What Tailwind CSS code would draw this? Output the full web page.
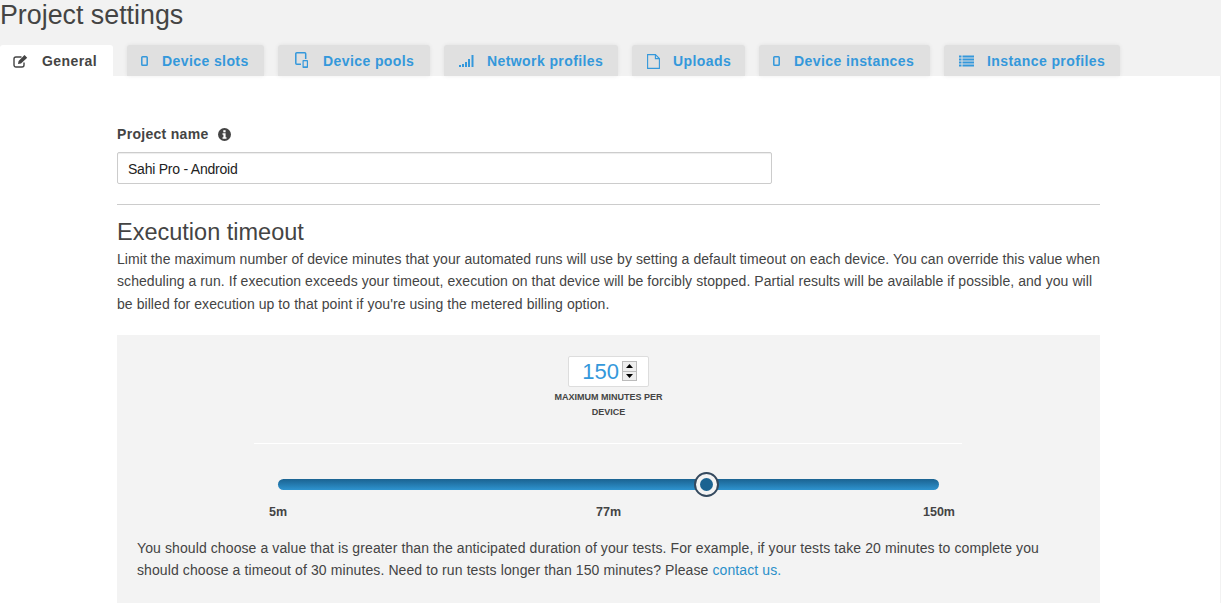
<!DOCTYPE html>
<html><head><meta charset="utf-8"><title>Project settings</title>
<script src="https://cdn.jsdelivr.net/npm/@tailwindcss/browser@4"></script></head>
<body class="bg-[#f2f2f2] font-['Liberation_Sans',Arial,sans-serif] text-[#444] overflow-hidden h-[603px] w-[1221px]">
<h1 class="text-[26.800px] leading-[31px] h-[45px] font-normal text-[#444]">Project settings</h1>
<nav class="flex gap-[14px] h-[31px] text-[14px] font-bold tracking-[0.41px] text-[#3498db]">
  <a class="w-[113px] bg-white rounded-t-[3px] flex items-center pt-[1px] pl-[13px] text-[#444]"><svg class="w-[15px] h-[14px] mr-[14px]" viewBox="0 0 15 14" fill="none" stroke="#444" stroke-width="1.400"><path d="M11 8.500v2.500a2 2 0 0 1-2 2H3a2 2 0 0 1-2-2V5a2 2 0 0 1 2-2h5.500"/><path d="M5 10l.6-3L11.500 1l2.700 2.700L8 9.500z" fill="#444" stroke="none"/></svg>General</a>
  <a class="w-[137px] bg-[#e0e0e0] rounded-t-[3px] shadow-[0_0_4px_rgba(0,0,0,0.08)] flex items-center pt-[1px] pl-[14px]"><svg class="w-[7px] h-[10px] mr-[14px]" viewBox="0 0 7 10" fill="none" stroke="#3498db" stroke-width="1.500"><rect x="0.800" y="0.800" width="5.400" height="8.400" rx="0.800"/></svg>Device slots</a>
  <a class="w-[152px] bg-[#e0e0e0] rounded-t-[3px] shadow-[0_0_4px_rgba(0,0,0,0.08)] flex items-center pt-[1px] pl-[17px]"><svg class="w-[13px] h-[16px] mr-[15px] -mt-[2px]" viewBox="0 0 13 16" fill="none" stroke="#3498db" stroke-width="1.500"><path d="M6 12.300H1.800a1 1 0 0 1-1-1V1.800a1 1 0 0 1 1-1h7.900a1 1 0 0 1 1 1V7"/><rect x="7.500" y="8" width="5.500" height="8" rx="0.700" fill="#3498db" stroke="none"/><rect x="8.700" y="9.300" width="3.100" height="5" fill="#e0e0e0" stroke="none"/></svg>Device pools</a>
  <a class="w-[174px] bg-[#e0e0e0] rounded-t-[3px] shadow-[0_0_4px_rgba(0,0,0,0.08)] flex items-center pt-[1px] pl-[15px]"><svg class="w-[15px] h-[12px] mr-[13px]" viewBox="0 0 15 12" fill="#3498db"><rect x="0" y="10" width="2" height="2"/><rect x="3" y="9" width="2" height="3"/><rect x="6" y="7" width="2" height="5"/><rect x="9" y="4" width="2" height="8"/><rect x="12.500" y="0" width="2" height="12"/></svg>Network profiles</a>
  <a class="w-[113px] bg-[#e0e0e0] rounded-t-[3px] shadow-[0_0_4px_rgba(0,0,0,0.08)] flex items-center pt-[1px] pl-[15px]"><svg class="w-[13px] h-[15px] mr-[13px]" viewBox="0 0 13 15" fill="none" stroke="#3498db" stroke-width="1.100"><path d="M.600.600h7.800l4 4v9.800H.600z"/><path d="M8.400.600v4h4"/></svg>Uploads</a>
  <a class="w-[171px] bg-[#e0e0e0] rounded-t-[3px] shadow-[0_0_4px_rgba(0,0,0,0.08)] flex items-center pt-[1px] pl-[14px]"><svg class="w-[7px] h-[10px] mr-[14px]" viewBox="0 0 7 10" fill="none" stroke="#3498db" stroke-width="1.500"><rect x="0.800" y="0.800" width="5.400" height="8.400" rx="0.800"/></svg>Device instances</a>
  <a class="w-[176px] bg-[#e0e0e0] rounded-t-[3px] shadow-[0_0_4px_rgba(0,0,0,0.08)] flex items-center pt-[1px] pl-[15px]"><svg class="w-[15px] h-[12px] mr-[13px]" viewBox="0 0 15 12" fill="#3498db"><rect x="0" y="0.500" width="2.500" height="2"/><rect x="3.500" y="0.500" width="11.500" height="2"/><rect x="0" y="3.500" width="2.500" height="2"/><rect x="3.500" y="3.500" width="11.500" height="2"/><rect x="0" y="6.500" width="2.500" height="2"/><rect x="3.500" y="6.500" width="11.500" height="2"/><rect x="0" y="9.500" width="2.500" height="2"/><rect x="3.500" y="9.500" width="11.500" height="2"/></svg>Instance profiles</a>
</nav>
<main class="bg-white w-[1220px] h-[527px] pl-[117px] pr-[120px] pt-[49px]">
  <label class="flex items-center h-[18px] text-[14px] font-bold tracking-[0.3px] text-[#444]">Project name<svg class="w-[13px] h-[13px] ml-[9px]" viewBox="0 0 13 13"><circle cx="6.500" cy="6.500" r="6.500" fill="#444"/><rect x="5.300" y="2.200" width="2.300" height="2.100" fill="#fff"/><path d="M4.500 5.300h3.100v4h.9v1.400H4.500V9.300h.9V6.700h-.9z" fill="#fff"/></svg></label>
  <div class="mt-[9px] w-[655px] h-[32px] border border-[#ccc] rounded-[2px] pl-[10px] text-[14px] tracking-[-0.23px] leading-[32px] text-[#222] shadow-[inset_0_1px_1px_rgba(0,0,0,0.075)]">Sahi Pro - Android</div>
  <hr class="mt-[20px] border-[#ccc]">
  <h2 class="mt-[14px] text-[23.500px] leading-[27px] font-normal text-[#444]">Execution timeout</h2>
  <p class="mt-[1.500px] -mr-[5px] text-[14px] tracking-[0.067px] leading-[22.500px] text-[#444]">Limit the maximum number of device minutes that your automated runs will use by setting a default timeout on each device. You can override this value when scheduling a run. If execution exceeds your timeout, execution on that device will be forcibly stopped. Partial results will be available if possible, and you will be billed for execution up to that point if you're using the metered billing option.</p>
  <section class="mt-[19.500px] bg-[#f3f3f3] h-[268px] pt-[21px] px-[20px] relative">
    <div class="flex flex-col items-center">
      <div class="w-[81px] h-[31px] bg-white border border-[#ddd] rounded-[2px] flex items-center justify-end pr-[11px]">
        <span class="text-[#3498db] text-[22px] leading-[31px] mr-[3px] mt-[1px]">150</span>
        <span class="w-[15px] h-[20px] flex flex-col bg-[#eee] border border-[#bbb] text-black">
          <span class="flex-1 flex items-center justify-center"><svg class="w-[7px] h-[4px]" viewBox="0 0 7 4"><path d="M3.500 0 7 4H0z"/></svg></span>
          <span class="flex-1 flex items-center justify-center border-t border-[#bbb]"><svg class="w-[7px] h-[4px]" viewBox="0 0 7 4"><path d="M0 0h7L3.500 4z"/></svg></span>
        </span>
      </div>
      <div class="mt-[3px] w-[130px] text-center text-[9px] font-bold leading-[15px] text-[#444]">MAXIMUM MINUTES PER DEVICE</div>
    </div>
    <hr class="mt-[23px] ml-[117px] mr-[118px] border-white">
    <div class="relative mt-[35px] mx-[141px] h-[11px] rounded-full bg-gradient-to-b from-[#1b6391] to-[#2e93cf]">
      <span class="absolute left-[416px] top-[-7px] w-[25px] h-[25px] rounded-full bg-[#f3f3f3] border-2 border-[#34495e] flex items-center justify-center"><span class="w-[13px] h-[13px] rounded-full bg-[#1b6391]"></span></span>
    </div>
    <div class="relative mt-[13px] h-[18px] text-[12.500px] font-bold leading-[18px] text-[#444]">
      <span class="absolute left-[132px]">5m</span><span class="absolute left-[459px]">77m</span><span class="absolute left-[786px]">150m</span>
    </div>
    <p class="mt-[16px] text-[14px] tracking-[0.1px] leading-[22.500px] text-[#444]">You should choose a value that is greater than the anticipated duration of your tests. For example, if your tests take 20 minutes to complete you should choose a timeout of 30 minutes. Need to run tests longer than 150 minutes? Please <a class="text-[#2a8fc9]">contact us.</a></p>
  </section>
</main>
</body></html>
